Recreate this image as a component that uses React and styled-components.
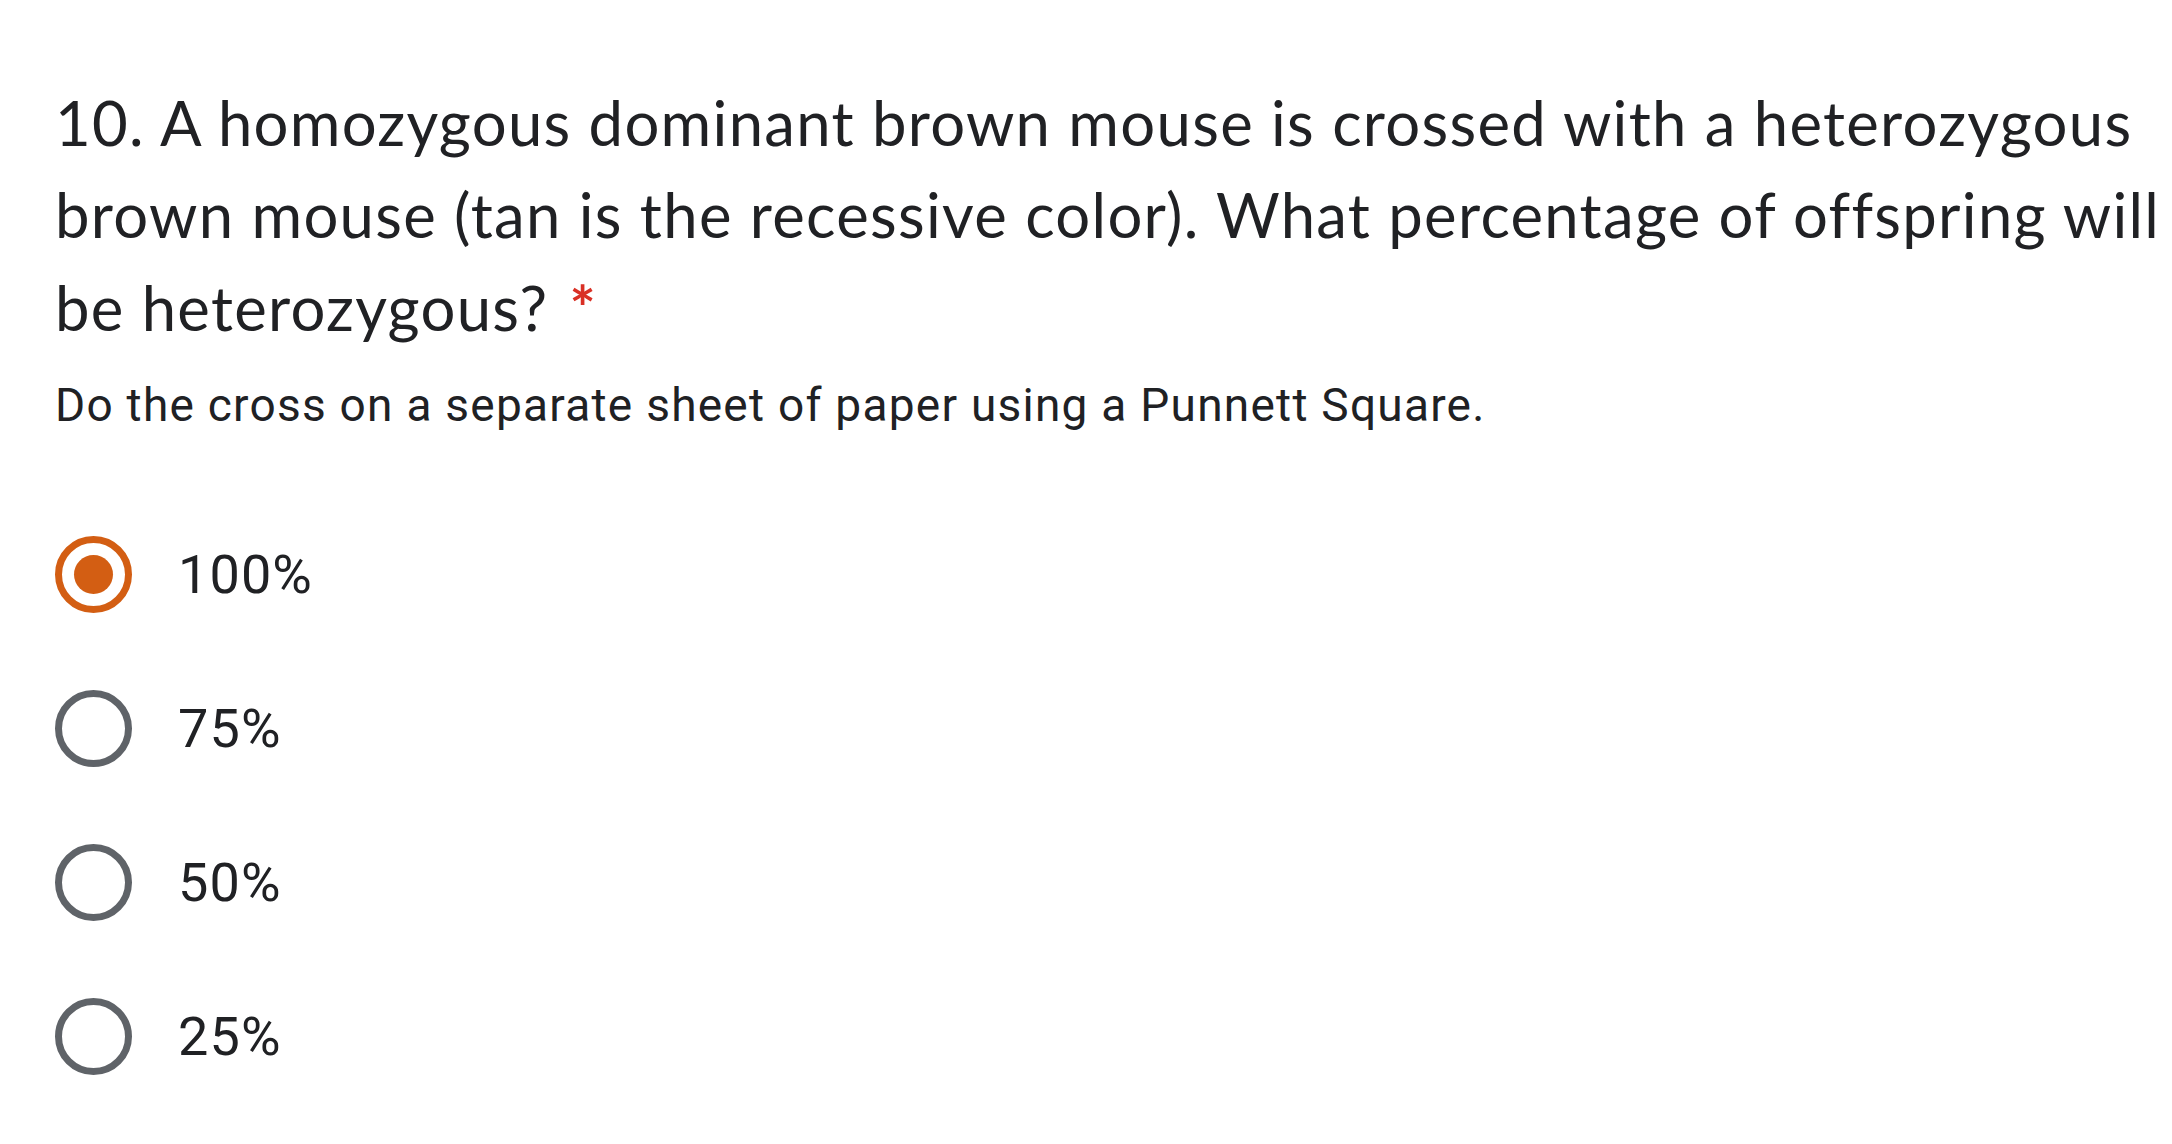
import React from "react";
import styled, { createGlobalStyle } from "styled-components";

const Global = createGlobalStyle`
  html, body { margin: 0; padding: 0; background: #ffffff; }
  body { -webkit-font-smoothing: antialiased; }
`;

const Page = styled.main`
  box-sizing: border-box;
  width: 2172px;
  min-height: 1144px;
  padding: 76px 0 0 55px;
  background: #ffffff;
  color: #202124;
  overflow: hidden;
`;

const Title = styled.h1`
  margin: 0;
  font-family: "Lato", "Open Sans", sans-serif;
  font-weight: 400;
  font-size: 61.6px;
  line-height: 92.4px;
  letter-spacing: 1.3px;
  white-space: nowrap;
  color: #202124;
`;

const Required = styled.span`
  color: #d93025;
  font-weight: 700;
  margin-left: 4px;
`;

const Description = styled.p`
  margin: 18px 0 0;
  font-family: "Roboto", sans-serif;
  font-size: 46px;
  line-height: 69px;
  letter-spacing: 1.25px;
  color: #202124;
  white-space: nowrap;
`;

const Options = styled.div`
  display: flex;
  flex-direction: column;
  margin-top: 57px;
`;

const OptionRow = styled.label`
  display: flex;
  align-items: center;
  gap: 46px;
  height: 154px;
`;

const Radio = styled.span`
  box-sizing: border-box;
  width: 77px;
  height: 77px;
  border-radius: 50%;
  border: 7.7px solid ${(p) => (p.$checked ? "#d35e13" : "#5f6368")};
  display: flex;
  align-items: center;
  justify-content: center;
  flex: none;
`;

const Dot = styled.span`
  width: 39px;
  height: 39px;
  border-radius: 50%;
  background: #d35e13;
`;

const OptionText = styled.span`
  font-family: "Roboto", sans-serif;
  font-size: 54px;
  letter-spacing: 1.1px;
  color: #202124;
`;

const options = [
  { label: "100%", checked: true },
  { label: "75%", checked: false },
  { label: "50%", checked: false },
  { label: "25%", checked: false },
];

export default function App() {
  return (
    <>
      <Global />
      <Page>
        <Title>
          10. A homozygous dominant brown mouse is crossed with a heterozygous
          <br />
          brown mouse (tan is the recessive color). What percentage of offspring will
          <br />
          be heterozygous? <Required>*</Required>
        </Title>
        <Description>
          Do the cross on a separate sheet of paper using a Punnett Square.
        </Description>
        <Options role="radiogroup">
          {options.map((o) => (
            <OptionRow key={o.label}>
              <Radio $checked={o.checked}>{o.checked && <Dot />}</Radio>
              <OptionText>{o.label}</OptionText>
            </OptionRow>
          ))}
        </Options>
      </Page>
    </>
  );
}
